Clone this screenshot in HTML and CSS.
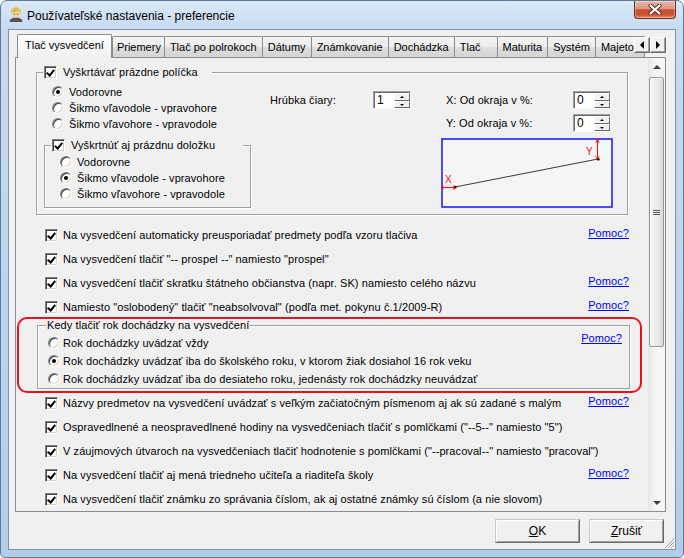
FILE: index.html
```html
<!DOCTYPE html>
<html lang="sk">
<head>
    <meta charset="UTF-8">
    <meta name="viewport" content="width=device-width, initial-scale=1.0">
    <title>Používateľské nastavenia - preferencie</title>
    <link rel="stylesheet" href="styles.css">
</head>
<body>
    <div class="window">
        <div class="titlebar">
            <svg class="app-icon" width="16" height="16" viewBox="0 0 16 16">
                <path d="M1.5 16c0-3 2.8-4.6 6.5-4.6s6.5 1.6 6.5 4.6z" fill="#555"/>
                <ellipse cx="8" cy="7.5" rx="4" ry="4.4" fill="#f3cfa5"/>
                <path d="M3.3 8.5C2.6 4.2 4.8 1.2 8 1.2s5.4 3 4.7 7.3c-.4-1.8-1.2-3-2.3-3.6-1.3 1-4.3 1.4-5.8.4-.6.9-1 2-1.3 3.2z" fill="#e3bb3c"/>
                <circle cx="6.4" cy="8" r=".6" fill="#333"/>
                <circle cx="9.6" cy="8" r=".6" fill="#333"/>
            </svg>
            <span class="title">Používateľské nastavenia - preferencie</span>
            <div class="close-btn">
                <svg width="14" height="11" viewBox="0 0 14 11">
                    <path d="M2.5 1.5l9 8M11.5 1.5l-9 8" stroke="#5c2a22" stroke-width="4" stroke-linecap="round"/>
                    <path d="M2.5 1.5l9 8M11.5 1.5l-9 8" stroke="#fff" stroke-width="2.2" stroke-linecap="round"/>
                </svg>
            </div>
        </div>

        <div class="client">
            <div class="tab-strip">
                <span class="tab active">Tlač vysvedčení</span>
                <span class="tab tab-tight">Priemery</span>
                <span class="tab">Tlač po polrokoch</span>
                <span class="tab">Dátumy</span>
                <span class="tab">Známkovanie</span>
                <span class="tab">Dochádzka</span>
                <span class="tab tab-wide">Tlač</span>
                <span class="tab">Maturita</span>
                <span class="tab">Systém</span>
                <span class="tab">Majetok</span>
                <div class="tab-scroll">
                    <span class="arrow-btn"><i class="tri tri-left"></i></span>
                    <span class="arrow-btn"><i class="tri tri-right"></i></span>
                </div>
            </div>

            <div class="tab-page">
                <div class="page-content">
                    <fieldset class="group group-strike">
                        <legend class="legend-check"><span class="check on"></span>Vyškrtávať prázdne políčka</legend>
                        <div class="strike-body">
                            <div class="strike-left">
                                <div class="radio-row"><span class="radio on"></span>Vodorovne</div>
                                <div class="radio-row"><span class="radio"></span>Šikmo vľavodole - vpravohore</div>
                                <div class="radio-row"><span class="radio"></span>Šikmo vľavohore - vpravodole</div>

                                <fieldset class="group group-clause">
                                    <legend class="legend-check"><span class="check on"></span>Vyškrtnúť aj prázdnu doložku</legend>
                                    <div class="clause-body">
                                        <div class="radio-row"><span class="radio"></span>Vodorovne</div>
                                        <div class="radio-row"><span class="radio on"></span>Šikmo vľavodole - vpravohore</div>
                                        <div class="radio-row"><span class="radio"></span>Šikmo vľavohore - vpravodole</div>
                                    </div>
                                </fieldset>
                            </div>

                            <div class="strike-width">
                                <span class="field-label">Hrúbka čiary:</span>
                                <div class="spin"><span class="spin-value">1</span><span class="spin-btns"><i class="spin-up"></i><i class="spin-down"></i></span></div>
                            </div>

                            <div class="strike-offset">
                                <div class="offset-row">
                                    <span>X: Od okraja v %:</span>
                                    <div class="spin"><span class="spin-value">0</span><span class="spin-btns"><i class="spin-up"></i><i class="spin-down"></i></span></div>
                                </div>
                                <div class="offset-row">
                                    <span>Y: Od okraja v %:</span>
                                    <div class="spin"><span class="spin-value">0</span><span class="spin-btns"><i class="spin-up"></i><i class="spin-down"></i></span></div>
                                </div>
                                <svg class="preview" width="172" height="70" viewBox="0 0 172 70">
                                    <rect x="1" y="1" width="170" height="68" fill="#f5f5f5" stroke="#2424f2" stroke-width="1.6"/>
                                    <line x1="14" y1="49" x2="157" y2="21" stroke="#3a3a3a" stroke-width="1"/>
                                    <rect x="13" y="48" width="2.4" height="2.4" fill="#000"/>
                                    <rect x="156" y="20" width="2.4" height="2.4" fill="#000"/>
                                    <line x1="1" y1="49.5" x2="14" y2="49.5" stroke="#f01010" stroke-width="1"/>
                                    <path d="M1.5 47.5v4M13 47.5v4" stroke="#f01010" stroke-width="1.6"/>
                                    <line x1="156.5" y1="2" x2="156.5" y2="21" stroke="#f01010" stroke-width="1"/>
                                    <path d="M154.5 1.5l4 3M158.5 1.5l-4 3M154.5 18.5l4 3M158.5 18.5l-4 3" stroke="#f01010" stroke-width="1"/>
                                    <text x="4" y="45" class="marker">X</text>
                                    <text x="145" y="17" class="marker">Y</text>
                                </svg>
                            </div>
                        </div>
                    </fieldset>

                    <div class="opt"><span class="check on"></span><span>Na vysvedčení automaticky preusporiadať predmety podľa vzoru tlačiva</span><a class="help" href="#">Pomoc?</a></div>
                    <div class="opt"><span class="check on"></span><span>Na vysvedčení tlačiť "-- prospel --" namiesto "prospel"</span></div>
                    <div class="opt"><span class="check on"></span><span>Na vysvedčení tlačiť skratku štátneho občianstva (napr. SK) namiesto celého názvu</span><a class="help" href="#">Pomoc?</a></div>
                    <div class="opt"><span class="check on"></span><span>Namiesto "oslobodený" tlačiť "neabsolvoval" (podľa met. pokynu č.1/2009-R)</span><a class="help" href="#">Pomoc?</a></div>

                    <fieldset class="group group-year">
                        <legend>Kedy tlačiť rok dochádzky na vysvedčení</legend>
                        <div class="year-body">
                            <div class="year-options">
                                <div class="radio-row"><span class="radio"></span>Rok dochádzky uvádzať vždy</div>
                                <div class="radio-row"><span class="radio on"></span>Rok dochádzky uvádzať iba do školského roku, v ktorom žiak dosiahol 16 rok veku</div>
                                <div class="radio-row"><span class="radio"></span>Rok dochádzky uvádzať iba do desiateho roku, jedenásty rok dochádzky neuvádzať</div>
                            </div>
                            <a class="help" href="#">Pomoc?</a>
                        </div>
                    </fieldset>

                    <div class="opt opt-after-group"><span class="check on"></span><span>Názvy predmetov na vysvedčení uvádzať s veľkým začiatočným písmenom aj ak sú zadané s malým</span><a class="help" href="#">Pomoc?</a></div>
                    <div class="opt"><span class="check on"></span><span>Ospravedlnené a neospravedlnené hodiny na vysvedčeniach tlačiť s pomlčkami ("--5--" namiesto "5")</span></div>
                    <div class="opt"><span class="check on"></span><span>V záujmových útvaroch na vysvedčeniach tlačiť hodnotenie s pomlčkami ("--pracoval--" namiesto "pracoval")</span></div>
                    <div class="opt"><span class="check on"></span><span>Na vysvedčení tlačiť aj mená triedneho učiteľa a riaditeľa školy</span><a class="help" href="#">Pomoc?</a></div>
                    <div class="opt"><span class="check on"></span><span>Na vysvedčení tlačiť známku zo správania číslom, ak aj ostatné známky sú číslom (a nie slovom)</span></div>
                </div>

                <div class="vscroll">
                    <div class="vs-btn"><i class="tri tri-up"></i></div>
                    <div class="vs-thumb"><i class="grip"></i></div>
                    <div class="vs-track"></div>
                    <div class="vs-btn"><i class="tri tri-down"></i></div>
                </div>

                <div class="highlight"></div>
            </div>

            <div class="dialog-buttons">
                <button class="btn btn-ok"><u>O</u>K</button>
                <button class="btn btn-cancel"><u>Z</u>rušiť</button>
            </div>

            <svg class="size-grip" width="12" height="12" viewBox="0 0 12 12">
                <path d="M11 2L2 11M11 5L5 11M11 8L8 11" stroke="#9a9a9a" stroke-width="1"/>
                <path d="M12 3L3 12M12 6L6 12M12 9L9 12" stroke="#fff" stroke-width="1"/>
            </svg>
        </div>
    </div>
</body>
</html>
```

FILE: styles.css
```css
* {
    box-sizing: border-box;
}
body {
    margin: 0;
    background: #fff;
    font-family: "Liberation Sans", Arial, sans-serif;
    font-size: 11px;
    line-height: 14px;
    letter-spacing: 0.08px;
    color: #000;
}

/* window frame */
.window {
    width: 684px;
    height: 558px;
    border: 1px solid #5f7a98;
    border-radius: 7px 7px 5px 5px;
    background: linear-gradient(180deg, #dbe9f8 0, #c6daf1 28px, #bcd3ed 60%, #b2cdea 100%);
    padding: 0 7px 7px;
    display: flex;
    flex-direction: column;
}
.titlebar {
    height: 28px;
    display: flex;
    align-items: flex-start;
}
.app-icon {
    margin-top: 5px;
    flex: none;
}
.title {
    margin: 7px 0 0 3px;
    font-size: 12px;
    line-height: 16px;
    letter-spacing: 0;
    color: #000;
}
.close-btn {
    margin-left: auto;
    margin-right: 0;
    width: 42px;
    height: 18px;
    border: 1px solid #6e2b22;
    border-top: none;
    border-radius: 0 0 4px 4px;
    background: linear-gradient(180deg, #ebb6a8 0%, #de9582 45%, #c84d33 52%, #c9542f 80%, #df8a5e 100%);
    box-shadow: inset 0 0 0 1px rgba(255, 255, 255, 0.35);
    display: flex;
    align-items: center;
    justify-content: center;
}

/* client area */
.client {
    position: relative;
    flex: 1;
    background: #f0f0f0;
    border: 1px solid #7f93ab;
    padding: 4px 0 0 6px;
}

/* tabs */
.tab-strip {
    position: relative;
    z-index: 2;
    display: flex;
    align-items: flex-end;
    width: 651px;
    height: 24px;
    margin-bottom: -1px;
    padding-left: 2px;
    overflow: hidden;
    white-space: nowrap;
}
.tab {
    flex: none;
    height: 21px;
    margin-bottom: 1px;
    margin-left: -1px;
    padding: 0 5px;
    border: 1px solid #898c95;
    border-bottom: none;
    border-radius: 2px 2px 0 0;
    background: linear-gradient(180deg, #f4f4f4 0%, #ececec 48%, #dedede 52%, #d4d4d4 100%);
    line-height: 20px;
    letter-spacing: 0;
}
.tab.active {
    height: 24px;
    margin-bottom: 0;
    margin-left: 0;
    padding: 0 7px;
    background: linear-gradient(180deg, #fdfdfd 0%, #f0f0f0 100%);
    line-height: 21px;
}
.tab.active + .tab {
    margin-left: 0;
}
.tab-tight {
    padding: 0 3px 0 4px;
}
.tab-wide {
    padding-right: 16px;
}
.tab-scroll {
    position: absolute;
    right: 0;
    top: 3px;
    display: flex;
    background: #f0f0f0;
}
.arrow-btn {
    width: 16px;
    height: 16px;
    border: 1px solid;
    border-color: #fff #696969 #696969 #fff;
    box-shadow: inset -1px -1px #a0a0a0;
    background: #f0f0f0;
    display: flex;
    align-items: center;
    justify-content: center;
}
.tri {
    display: block;
    width: 0;
    height: 0;
    border: 4px solid transparent;
}
.tri-left {
    border-right-color: #000;
    border-left-width: 0;
}
.tri-right {
    border-left-color: #000;
    border-right-width: 0;
}
.tri-up {
    border-width: 0 4px 4px;
    border-bottom-color: #404040;
}
.tri-down {
    border-width: 4px 4px 0;
    border-top-color: #404040;
}

.tab-page {
    position: relative;
    display: flex;
    width: 651px;
    height: 455px;
    border: 1px solid #898c95;
    background: #f0f0f0;
}
.page-content {
    flex: 1;
    overflow: hidden;
    padding-top: 7px;
}

/* group boxes */
.group {
    margin: 0;
    padding: 0;
    border: 1px solid #a0a0a0;
    box-shadow: inset 1px 1px #fff, 1px 1px #fff;
}
.group legend {
    padding: 0 1px;
    background: #f0f0f0;
    line-height: 14px;
}
.legend-check {
    display: flex;
    align-items: center;
}
.legend-check .check {
    margin-right: 6px;
}
.group-strike {
    margin-left: 20px;
    width: 592px;
}
.group-strike > legend {
    margin-left: 6px;
    padding-right: 14px;
}
.strike-body {
    display: flex;
    align-items: flex-start;
    padding: 5px 0 6px 7px;
}
.strike-left {
    width: 207px;
}
.strike-left > .radio-row {
    padding-left: 8px;
}
.radio-row {
    display: flex;
    align-items: center;
    height: 16px;
    white-space: nowrap;
}
.radio-row .radio {
    margin-right: 5px;
}
.group-clause {
    margin-top: 6px;
    width: 207px;
}
.group-clause > legend {
    margin-left: 6px;
    padding-right: 28px;
}
.clause-body {
    padding: 2px 0 5px 15px;
}

.strike-width {
    display: flex;
    align-items: center;
    height: 18px;
    margin: 7px 0 0 19px;
}
.field-label {
    width: 103px;
}
.strike-offset {
    width: 172px;
    margin: 7px 0 0 30px;
}
.offset-row {
    display: flex;
    align-items: center;
    height: 18px;
    padding-left: 5px;
}
.offset-row + .offset-row {
    margin-top: 5px;
}
.offset-row .spin {
    margin-left: auto;
    margin-right: 2px;
}
.preview {
    display: block;
    margin-top: 6px;
}
.marker {
    font-family: "Liberation Sans", Arial, sans-serif;
    font-size: 10px;
    fill: #f01010;
}

/* spin box */
.spin {
    display: flex;
    width: 38px;
    height: 18px;
    border: 1px solid;
    border-color: #a0a0a0 #fff #fff #a0a0a0;
    box-shadow: inset 1px 1px #696969;
    background: #fff;
    padding: 1px 0 0 1px;
}
.spin-value {
    flex: 1;
    padding-left: 2px;
    font-size: 12px;
    line-height: 15px;
}
.spin-btns {
    display: flex;
    flex-direction: column;
    width: 16px;
}
.spin-up,
.spin-down {
    flex: 1;
    position: relative;
    background: #f0f0f0;
    border: 1px solid;
    border-color: #fff #696969 #696969 #fff;
}
.spin-up::after,
.spin-down::after {
    content: "";
    position: absolute;
    left: 5px;
    top: 2px;
    border: 2px solid transparent;
}
.spin-up::after {
    border-bottom-color: #000;
    border-top-width: 0;
}
.spin-down::after {
    border-top-color: #000;
    border-bottom-width: 0;
}

/* check boxes and radios */
.check {
    position: relative;
    flex: none;
    width: 13px;
    height: 13px;
    border: 1px solid;
    border-color: #808080 #fff #fff #808080;
    box-shadow: inset 1px 1px #404040, inset -1px -1px #d4d0c8;
    background: #fff;
}
.check.on::after {
    content: "";
    position: absolute;
    left: 3px;
    top: 1px;
    width: 3px;
    height: 6px;
    border: solid #000;
    border-width: 0 2px 2px 0;
    transform: rotate(40deg);
}
.radio {
    position: relative;
    flex: none;
    width: 12px;
    height: 12px;
    border-radius: 50%;
    border: 1px solid;
    border-color: #808080 #fff #fff #808080;
    box-shadow: inset 1px 1px #404040, inset -1px -1px #d4d0c8;
    background: #fff;
}
.radio.on::after {
    content: "";
    position: absolute;
    left: 3px;
    top: 3px;
    width: 4px;
    height: 4px;
    border-radius: 50%;
    background: #000;
}

/* option rows */
.opt {
    display: flex;
    align-items: center;
    height: 24px;
    width: 584px;
    margin-left: 29px;
    white-space: nowrap;
}
.group-strike + .opt {
    margin-top: 8px;
}
.opt .check {
    margin-right: 5px;
}
.help {
    margin-left: auto;
    margin-bottom: 4px;
    color: #0000ff;
    text-decoration: underline;
}
.opt-after-group {
    margin-top: 2px;
}

.group-year {
    margin: -1px 0 0 21px;
    width: 593px;
}
.group-year > legend {
    margin-left: 8px;
}
.year-body {
    display: flex;
    padding: 2px 7px 0 10px;
}
.year-options .radio-row {
    height: 18px;
}
.year-options .radio {
    margin-right: 3px;
}
.year-body .help {
    align-self: flex-start;
    margin: -3px 0 0 auto;
}

/* scrollbar */
.vscroll {
    flex: none;
    display: flex;
    flex-direction: column;
    width: 17px;
    background: linear-gradient(90deg, #e6e6e6 0%, #f4f4f4 40%, #f7f7f7 100%);
}
.vs-btn {
    height: 17px;
    display: flex;
    align-items: center;
    justify-content: center;
}
.vs-thumb {
    height: 270px;
    margin: 2px 1px 0 1px;
    border: 1px solid #969696;
    border-radius: 2px;
    background: linear-gradient(90deg, #f6f6f6 0%, #ececec 50%, #d9d9d9 100%);
    box-shadow: inset 1px 1px #fff;
    display: flex;
    align-items: center;
    justify-content: center;
}
.grip {
    display: block;
    width: 7px;
    height: 5px;
    border-top: 1px solid #5a5a5a;
    border-bottom: 1px solid #5a5a5a;
    position: relative;
}
.grip::after {
    content: "";
    position: absolute;
    left: 0;
    right: 0;
    top: 1px;
    border-top: 1px solid #5a5a5a;
}
.vs-track {
    flex: 1;
}

/* red annotation round the year group */
.highlight {
    position: absolute;
    left: 1px;
    top: 259px;
    width: 625px;
    height: 76px;
    border: 2px solid #e3141f;
    border-radius: 10px;
    pointer-events: none;
}

/* dialog buttons */
.dialog-buttons {
    display: flex;
    justify-content: flex-end;
    gap: 9px;
    width: 651px;
    margin-top: 7px;
    padding-right: 2px;
}
.btn {
    height: 24px;
    padding: 0;
    font-family: "Liberation Sans", Arial, sans-serif;
    font-size: 12px;
    color: #000;
    background: #f0f0f0;
    border: 1px solid;
    border-color: #c8c8c8 #696969 #696969 #c8c8c8;
    box-shadow: inset 1px 1px #fff, inset -1px -1px #a0a0a0;
}
.btn-ok {
    width: 85px;
}
.btn-cancel {
    width: 75px;
}
.size-grip {
    position: absolute;
    right: 0;
    bottom: 0;
}
```
